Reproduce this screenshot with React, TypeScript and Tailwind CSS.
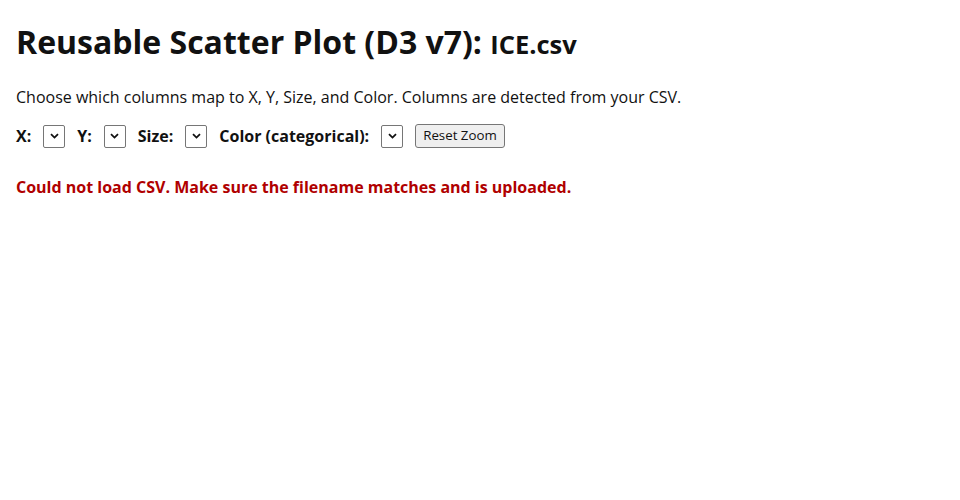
import React from 'react';

const Picker = ({ label }: { label: string }) => {
  return (
    <label className="flex items-center gap-3 font-bold">
      <span>{label}</span>
      <span className="flex h-[23px] w-[22px] items-center justify-center rounded-[2px] border border-[#767676] bg-white">
        <svg width="9" height="6" viewBox="0 0 9 6" fill="none">
          <path d="M1 1.2 L4.5 4.6 L8 1.2" stroke="#111" strokeWidth="1.8" />
        </svg>
      </span>
    </label>
  );
};

export default function App() {
  return (
    <div className="min-h-[500px] bg-white px-4 text-[#111] [font-family:'Open_Sans',sans-serif]">
      <h1 className="mt-5 mb-5 text-[32px] leading-[44px] font-bold">
        Reusable Scatter Plot (D3 v7): <span className="text-[25.5px]">ICE.csv</span>
      </h1>
      <p className="mb-4 text-base leading-[22px]">
        Choose which columns map to X, Y, Size, and Color. Columns are detected from your CSV.
      </p>
      <div className="flex items-center gap-3 text-base">
        <Picker label="X:" />
        <Picker label="Y:" />
        <Picker label="Size:" />
        <Picker label="Color (categorical):" />
        <button className="h-[24px] rounded-[3px] border border-[#767676] bg-[#efefef] px-[7px] text-[13.3px] leading-none">
          Reset Zoom
        </button>
      </div>
      <div className="mt-7 text-base leading-[22px] font-bold text-[#b00000]">
        Could not load CSV. Make sure the filename matches and is uploaded.
      </div>
    </div>
  );
}
